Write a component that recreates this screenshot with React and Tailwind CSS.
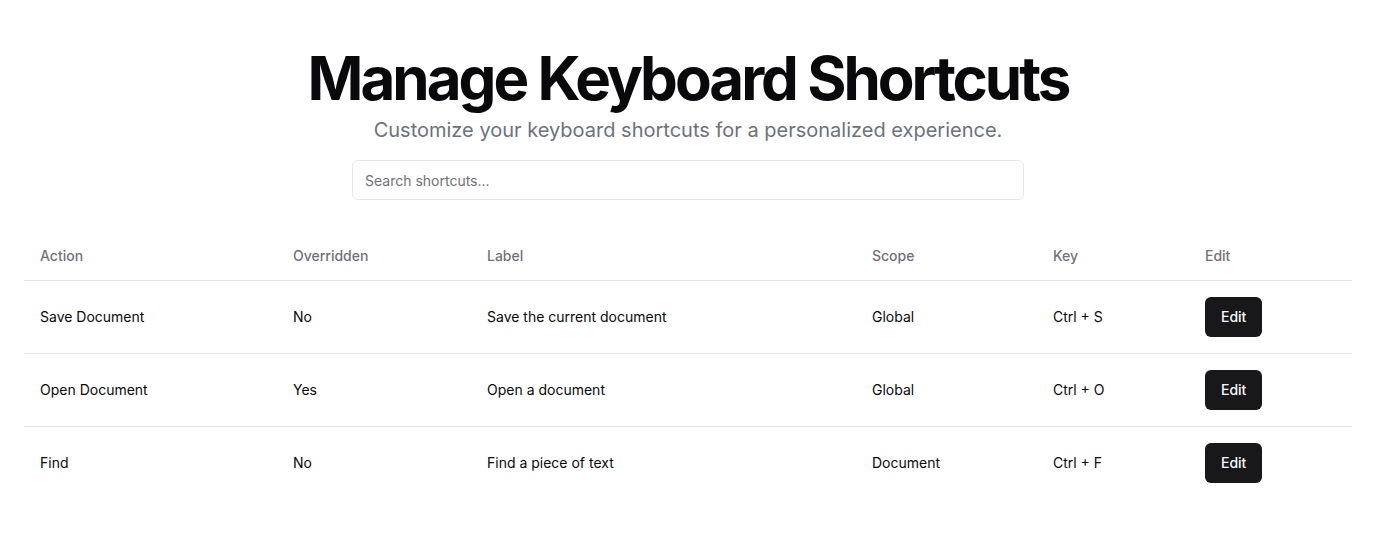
export default function App() {
  const rows = [
    ["Save Document", "No", "Save the current document", "Global", "Ctrl + S"],
    ["Open Document", "Yes", "Open a document", "Global", "Ctrl + O"],
    ["Find", "No", "Find a piece of text", "Document", "Ctrl + F"],
  ];
  return (
    <div className="min-h-[547px] bg-white px-6 pt-12 text-[#09090b]" style={{ fontFamily: "Inter, sans-serif" }}>
      <div className="flex flex-col items-center">
        <h1 className="text-6xl leading-none font-bold tracking-tighter">Manage Keyboard Shortcuts</h1>
        <p className="mt-2 text-xl leading-7 text-[#6b7280]">Customize your keyboard shortcuts for a personalized experience.</p>
        <input
          className="mt-4 h-10 w-[672px] rounded-md border border-[#e4e4e7] px-3 text-sm placeholder:text-[#71717a] outline-none"
          placeholder="Search shortcuts..."
        />
      </div>
      <table className="mt-8 w-full table-fixed border-collapse text-sm">
        <colgroup>
          <col className="w-[253px]" />
          <col className="w-[194px]" />
          <col className="w-[385px]" />
          <col className="w-[181px]" />
          <col className="w-[152px]" />
          <col />
        </colgroup>
        <thead>
          <tr className="border-b border-[#e4e4e7]">
            {["Action", "Overridden", "Label", "Scope", "Key", "Edit"].map((h) => (
              <th key={h} className="h-12 px-4 text-left align-middle font-medium text-[#71717a]">{h}</th>
            ))}
          </tr>
        </thead>
        <tbody>
          {rows.map((r, i) => (
            <tr key={i} className={i < rows.length - 1 ? "border-b border-[#e4e4e7]" : ""}>
              {r.map((c, j) => (
                <td key={j} className="p-4 align-middle">{c}</td>
              ))}
              <td className="p-4 align-middle">
                <button className="h-10 rounded-md bg-[#18181b] px-4 text-sm font-medium text-[#fafafa]">Edit</button>
              </td>
            </tr>
          ))}
        </tbody>
      </table>
    </div>
  );
}
